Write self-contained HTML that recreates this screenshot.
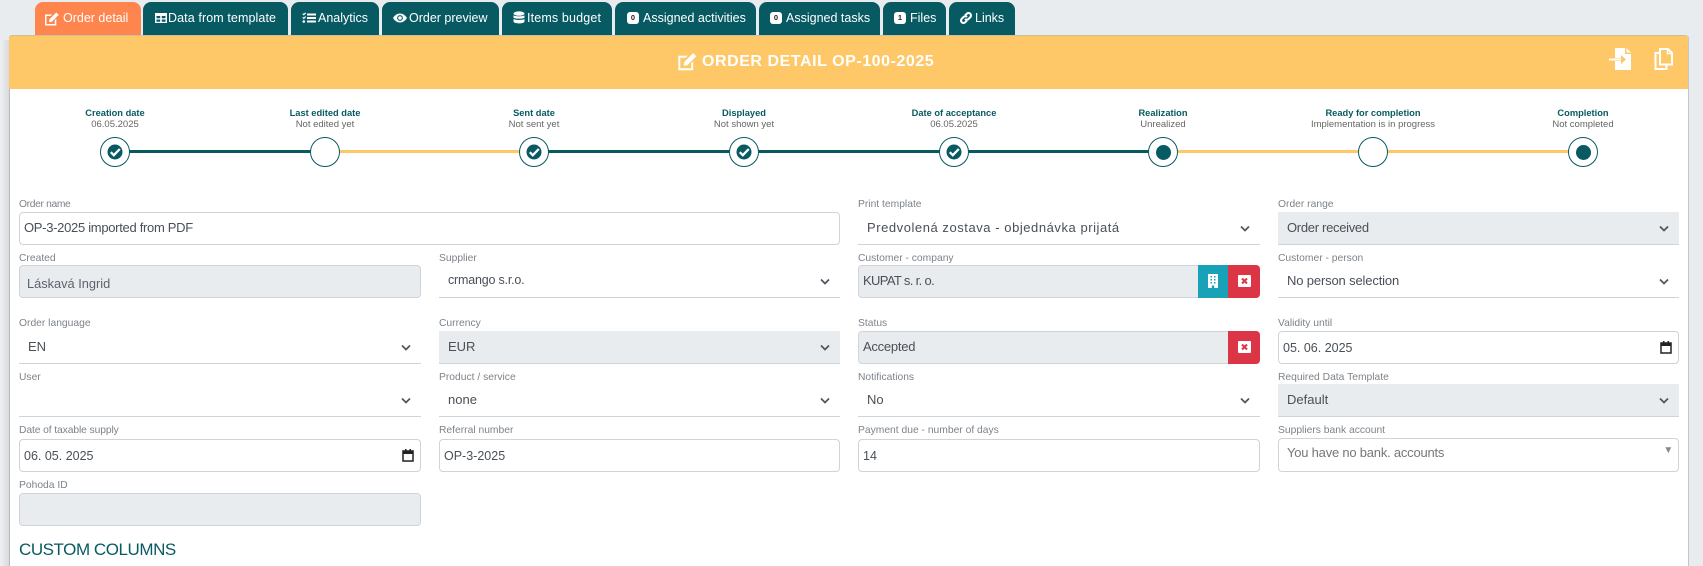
<!DOCTYPE html>
<html lang="en"><head><meta charset="utf-8"><title>Order detail</title>
<style>
*{box-sizing:border-box;margin:0;padding:0}
html,body{width:1703px;height:566px;overflow:hidden;background:#e9ecef;font-family:"Liberation Sans",sans-serif}
#shade{position:absolute;left:0;top:0;width:9px;height:566px;background:linear-gradient(90deg,#eef0f2 0,#d8dbde 100%)}
#shade2{position:absolute;left:0;top:0;width:30px;height:40px;background:#e9ecef}
.tab{position:absolute;top:2px;height:33px;background:#085a62;color:#fff;border-radius:8px 8px 0 0;font-size:12.5px;line-height:32px;white-space:nowrap}
.tab.on{background:#ff854f}
.tab svg{position:absolute;top:9px;width:14px;height:14px;fill:#fff}
.tab span{position:absolute;top:0}
.bd{position:absolute;top:10px;width:12px;height:12px;border-radius:3px;background:#fff;color:#222;font-size:7.5px;font-weight:bold;line-height:12px;text-align:center}
#card{position:absolute;left:9px;top:35px;width:1680px;height:531px;background:#fff;border:1px solid #c4c7ca;border-bottom:0;border-radius:3px 3px 0 0;border-left-color:#b9bcbf;border-top:0}
#head{position:absolute;left:9px;top:35px;width:1679px;height:54px;background:#fec868;border-top:1px solid #c9c0a0;border-radius:3px 3px 0 0}
#title{position:absolute;left:702px;top:52px;color:#fff;font-size:16px;font-weight:bold;line-height:20px;white-space:nowrap;letter-spacing:.55px}
.ln{position:absolute;top:150px;height:3px;width:180px}
.c{position:absolute;top:137px;width:30px;height:30px;border:1.3px solid #085a62;border-radius:50%;background:#fff}
.dot{position:absolute;left:6.5px;top:6.5px;width:15px;height:15px;background:#085a62;border-radius:50%}
.c svg{position:absolute;left:6px;top:6px;width:16px;height:16px}
.st{position:absolute;width:200px;text-align:center;white-space:nowrap}
.st b{position:absolute;left:0;right:0;top:106px;font-size:9.3px;line-height:14px;color:#085a62}
.st i{position:absolute;left:0;right:0;top:118px;font-style:normal;font-size:9.5px;line-height:14px;color:#666}
.lb{position:absolute;font-size:10.3px;line-height:13px;color:#7d8389;white-space:nowrap}
.f{position:absolute;height:33px;font-size:13px;line-height:31px;color:#495057;white-space:nowrap}
.box{border:1px solid #ced4da;border-radius:4px;background:#fff;padding-left:4px}
.dis{background:#e9ecef}
.sel{border-bottom:1px solid #ced4da;padding-left:9px;line-height:31px}
.sel svg{position:absolute;right:10px;top:13px;width:10px;height:7px;fill:none;stroke:#4f5660;stroke-width:1.7}
.cal{position:absolute;right:6px;top:8px;width:12px;height:14px}
.btn{position:absolute;height:33px;width:31px}
.btn svg{position:absolute}
</style></head>
<body>
<div id="shade"></div><div id="shade2"></div>

<div class="tab on" style="left:35px;width:106px"><svg style="left:9px;width:16px;height:15px" viewBox="0 0 16 15"><path d="M1 3.5h7L6.7 5H2.5v8h8.3V9.3l1.5-1.5V14.500H1z"/><path d="M5.500 8.300 12.300 1.500l2.400 2.400-6.800 6.800-2.800.4z"/></svg><span style="left:28px">Order detail</span></div>
<div class="tab" style="left:143px;width:145px"><svg style="left:11px" viewBox="0 0 14 14"><path fill-rule="evenodd" d="M1 2h12v10H1zM2.500 5v2.300h3.700V5zm5.300 0v2.300h3.700V5zM2.500 8.500v2.300h3.700V8.500zm5.300 0v2.300h3.700V8.500z"/></svg><span style="left:25px;letter-spacing:.1px">Data from template</span></div>
<div class="tab" style="left:291px;width:88px"><svg style="left:11px" viewBox="0 0 14 14"><path d="M5 2.500h9v2H5zM5 6h9v2H5zM5 9.500h9v2H5z"/><path d="M.3 3l.8-.8.7.7L3.300 1.400l.8.8-2.300 2.300zM.3 6.700l.8-.8.700.7 1.500-1.500.8.8-2.300 2.300z"/><circle cx="1.800" cy="10.500" r="1.300"/></svg><span style="left:27px">Analytics</span></div>
<div class="tab" style="left:382px;width:117px"><svg style="left:11px" viewBox="0 0 14 14"><path fill-rule="evenodd" d="M7 2.500c3.300 0 5.800 2.400 7 4.500-1.200 2.100-3.700 4.500-7 4.500S1.200 9.100 0 7c1.200-2.100 3.700-4.500 7-4.500zm0 1.600a2.900 2.900 0 1 0 0 5.800 2.900 2.900 0 0 0 0-5.800z"/><circle cx="7" cy="7" r="1.800"/></svg><span style="left:27px">Order preview</span></div>
<div class="tab" style="left:502px;width:110px"><svg style="left:11px;width:12px" viewBox="0 0 12 14"><ellipse cx="6" cy="2.600" rx="5.500" ry="2.200"/><path d="M.5 4.300C1.500 5.700 10.500 5.700 11.500 4.300v2.300C10.500 8 1.500 8 .5 6.600zM.5 7.900C1.500 9.300 10.500 9.300 11.500 7.900v2.600c-.6 2.600-10.400 2.600-11 0z"/></svg><span style="left:25px;letter-spacing:.15px">Items budget</span></div>
<div class="tab" style="left:615px;width:141px"><div class="bd" style="left:12px">0</div><span style="left:28px">Assigned activities</span></div>
<div class="tab" style="left:759px;width:121px"><div class="bd" style="left:11px">0</div><span style="left:27px">Assigned tasks</span></div>
<div class="tab" style="left:883px;width:63px"><div class="bd" style="left:11px">1</div><span style="left:27px">Files</span></div>
<div class="tab" style="left:949px;width:66px"><svg style="left:10px" viewBox="0 0 14 14"><g fill="none" stroke="#fff" stroke-width="2"><path d="M6 4.500 8 2.500a2.500 2.500 0 0 1 3.500 3.500L9.500 8a2.500 2.500 0 0 1-3.500 0"/><path d="M8 9.500 6 11.500A2.500 2.500 0 0 1 2.500 8L4.500 6a2.500 2.500 0 0 1 3.500 0"/></g></svg><span style="left:26px">Links</span></div>

<div id="card"></div>
<div id="head"></div>
<svg style="position:absolute;left:677px;top:51px" width="21" height="20" viewBox="0 0 16 15" fill="#fff"><path d="M1 3.500h7L6.700 5H2.500v8h8.300V9.300l1.500-1.500V14.500H1z"/><path d="M5.500 8.300 12.300 1.500l2.400 2.400-6.800 6.800-2.800.4z"/></svg>
<div id="title">ORDER DETAIL OP-100-2025</div>
<svg style="position:absolute;left:1609px;top:48px" width="24" height="22" viewBox="0 0 24 22" fill="#fff"><path fill-rule="evenodd" d="M6 0h10v6h6v16H6V13h6v3l5-4.500L12 7v3H6zM17.500 0 22 4.500h-4.500z"/><path d="M0 10.500h12v2H0z"/></svg>
<svg style="position:absolute;left:1654px;top:48px" width="19" height="22" viewBox="0 0 19 22" fill="none" stroke="#fff" stroke-width="2"><path d="M6 1h8l4 4v11.500H6z"/><path d="M6 5H1.500v16h11v-4.500"/><path d="M13.500 1v4.500H18" stroke-width="1.500"/></svg>

<div class="ln" style="left:115px;width:210px;background:#085a62"></div>
<div class="ln" style="left:325px;width:209px;background:#fec868"></div>
<div class="ln" style="left:534px;width:420px;background:#085a62"></div>
<div class="ln" style="left:954px;width:209px;background:#085a62"></div>
<div class="ln" style="left:1163px;width:420px;background:#fec868"></div>

<div class="st" style="left:15px"><b>Creation date</b><i>06.05.2025</i></div>
<div class="st" style="left:225px"><b>Last edited date</b><i>Not edited yet</i></div>
<div class="st" style="left:434px"><b>Sent date</b><i>Not sent yet</i></div>
<div class="st" style="left:644px"><b>Displayed</b><i>Not shown yet</i></div>
<div class="st" style="left:854px"><b>Date of acceptance</b><i>06.05.2025</i></div>
<div class="st" style="left:1063px"><b>Realization</b><i>Unrealized</i></div>
<div class="st" style="left:1273px"><b>Ready for completion</b><i>Implementation is in progress</i></div>
<div class="st" style="left:1483px"><b>Completion</b><i>Not completed</i></div>

<div class="c" style="left:100px"><svg viewBox="0 0 16 16"><circle cx="8" cy="8" r="7.500" fill="#085a62"/><path d="M3.800 8.200 6.800 11.200 12.800 5" fill="none" stroke="#fff" stroke-width="2.300"/></svg></div>
<div class="c" style="left:310px"></div>
<div class="c" style="left:519px"><svg viewBox="0 0 16 16"><circle cx="8" cy="8" r="7.500" fill="#085a62"/><path d="M3.800 8.200 6.800 11.200 12.800 5" fill="none" stroke="#fff" stroke-width="2.300"/></svg></div>
<div class="c" style="left:729px"><svg viewBox="0 0 16 16"><circle cx="8" cy="8" r="7.500" fill="#085a62"/><path d="M3.800 8.200 6.800 11.200 12.800 5" fill="none" stroke="#fff" stroke-width="2.300"/></svg></div>
<div class="c" style="left:939px"><svg viewBox="0 0 16 16"><circle cx="8" cy="8" r="7.500" fill="#085a62"/><path d="M3.800 8.200 6.800 11.200 12.800 5" fill="none" stroke="#fff" stroke-width="2.300"/></svg></div>
<div class="c" style="left:1148px"><div class="dot"></div></div>
<div class="c" style="left:1358px"></div>
<div class="c" style="left:1568px"><div class="dot"></div></div>

<div class="lb" style="left:19px;top:198px;letter-spacing:-.35px">Order name</div>
<div class="f box" style="left:19px;top:212px;width:821px;line-height:29px;letter-spacing:-.3px">OP-3-2025 imported from PDF</div>
<div class="lb" style="left:858px;top:198px">Print template</div>
<div class="f sel" style="left:858px;top:212px;width:402px;letter-spacing:.55px">Predvolená zostava - objednávka prijatá<svg viewBox="0 0 10 7"><path d="M1 1.500 5 5.500 9 1.500"/></svg></div>
<div class="lb" style="left:1278px;top:198px">Order range</div>
<div class="f sel dis" style="left:1278px;top:212px;width:401px;letter-spacing:-.3px">Order received<svg viewBox="0 0 10 7"><path d="M1 1.500 5 5.500 9 1.500"/></svg></div>

<div class="lb" style="left:19px;top:252px">Created</div>
<div class="f box dis" style="left:19px;top:265px;width:402px;padding-left:7px;font-size:12.8px;line-height:35px;color:#5c636a">Láskavá Ingrid</div>
<div class="lb" style="left:439px;top:252px">Supplier</div>
<div class="f sel" style="left:439px;top:265px;width:401px;font-size:12.5px;letter-spacing:-.2px">crmango s.r.o.<svg viewBox="0 0 10 7"><path d="M1 1.500 5 5.500 9 1.500"/></svg></div>
<div class="lb" style="left:858px;top:252px">Customer - company</div>
<div class="f box dis" style="left:858px;top:265px;width:402px;line-height:30px;letter-spacing:-.65px">KUPAT s. r. o.</div>
<div class="btn" style="left:1198px;top:265px;width:30px;background:#17a2b8"><svg style="left:10px;top:9px" width="10" height="14" viewBox="0 0 10 14"><path fill="#fff" fill-rule="evenodd" d="M0 0h10v14H6.200v-2.500H3.800V14H0zM2.500 2v1.500h1.500V2zm3.500 0v1.500h1.500V2zM2.500 5v1.500h1.500V5zm3.500 0v1.500h1.500V5zM2.500 8v1.500h1.500V8zm3.500 0v1.500h1.500V8z"/></svg></div>
<div class="btn" style="left:1228px;top:265px;width:32px;background:#dc3545;border-radius:0 4px 4px 0"><svg style="left:10px;top:10px" width="13" height="12" viewBox="0 0 13 12"><rect width="13" height="12" rx="1" fill="#fff"/><path d="M4 3.500 9 8.500M9 3.500 4 8.500" stroke="#dc3545" stroke-width="2"/></svg></div>
<div class="lb" style="left:1278px;top:252px">Customer - person</div>
<div class="f sel" style="left:1278px;top:265px;width:401px;letter-spacing:-.15px">No person selection<svg viewBox="0 0 10 7"><path d="M1 1.500 5 5.500 9 1.500"/></svg></div>

<div class="lb" style="left:19px;top:317px">Order language</div>
<div class="f sel" style="left:19px;top:331px;width:402px">EN<svg viewBox="0 0 10 7"><path d="M1 1.500 5 5.500 9 1.500"/></svg></div>
<div class="lb" style="left:439px;top:317px">Currency</div>
<div class="f sel dis" style="left:439px;top:331px;width:401px">EUR<svg viewBox="0 0 10 7"><path d="M1 1.500 5 5.500 9 1.500"/></svg></div>
<div class="lb" style="left:858px;top:317px">Status</div>
<div class="f box dis" style="left:858px;top:331px;width:402px;line-height:29px;letter-spacing:-.25px">Accepted</div>
<div class="btn" style="left:1228px;top:331px;width:32px;background:#dc3545;border-radius:0 4px 4px 0"><svg style="left:10px;top:10px" width="13" height="12" viewBox="0 0 13 12"><rect width="13" height="12" rx="1" fill="#fff"/><path d="M4 3.500 9 8.500M9 3.500 4 8.500" stroke="#dc3545" stroke-width="2"/></svg></div>
<div class="lb" style="left:1278px;top:317px">Validity until</div>
<div class="f box" style="left:1278px;top:331px;width:401px;font-size:12.5px;line-height:33px">05. 06. 2025<svg class="cal" viewBox="0 0 12 14"><path fill="none" stroke="#222" stroke-width="1.500" d="M1 3h10v10H1z"/><path fill="#222" d="M1 3h10v3H1zM3 1h1.500v2H3zM7.500 1H9v2H7.500z"/></svg></div>

<div class="lb" style="left:19px;top:371px">User</div>
<div class="f sel" style="left:19px;top:384px;width:402px"><svg viewBox="0 0 10 7"><path d="M1 1.500 5 5.500 9 1.500"/></svg></div>
<div class="lb" style="left:439px;top:371px">Product / service</div>
<div class="f sel" style="left:439px;top:384px;width:401px">none<svg viewBox="0 0 10 7"><path d="M1 1.500 5 5.500 9 1.500"/></svg></div>
<div class="lb" style="left:858px;top:371px">Notifications</div>
<div class="f sel" style="left:858px;top:384px;width:402px">No<svg viewBox="0 0 10 7"><path d="M1 1.500 5 5.500 9 1.500"/></svg></div>
<div class="lb" style="left:1278px;top:371px">Required Data Template</div>
<div class="f sel dis" style="left:1278px;top:384px;width:401px">Default<svg viewBox="0 0 10 7"><path d="M1 1.500 5 5.500 9 1.500"/></svg></div>

<div class="lb" style="left:19px;top:424px;letter-spacing:-.1px">Date of taxable supply</div>
<div class="f box" style="left:19px;top:439px;width:402px;font-size:12.5px;line-height:33px">06. 05. 2025<svg class="cal" viewBox="0 0 12 14"><path fill="none" stroke="#222" stroke-width="1.500" d="M1 3h10v10H1z"/><path fill="#222" d="M1 3h10v3H1zM3 1h1.500v2H3zM7.500 1H9v2H7.500z"/></svg></div>
<div class="lb" style="left:439px;top:424px">Referral number</div>
<div class="f box" style="left:439px;top:439px;width:401px;font-size:12.5px;line-height:33px">OP-3-2025</div>
<div class="lb" style="left:858px;top:424px">Payment due - number of days</div>
<div class="f box" style="left:858px;top:439px;width:402px;font-size:12.5px;line-height:33px">14</div>
<div class="lb" style="left:1278px;top:424px">Suppliers bank account</div>
<div class="f box" style="left:1278px;top:438px;width:401px;height:34px;padding-left:8px;color:#777;line-height:27px;letter-spacing:-.22px">You have no bank. accounts<span style="position:absolute;right:5px;top:-2px;font-size:10px;color:#888">▼</span></div>

<div class="lb" style="left:19px;top:479px">Pohoda ID</div>
<div class="f box dis" style="left:19px;top:493px;width:402px"></div>
<div style="position:absolute;left:19px;top:539px;font-size:17px;line-height:22px;color:#085a62;white-space:nowrap;letter-spacing:-.45px">CUSTOM COLUMNS</div>
</body></html>
